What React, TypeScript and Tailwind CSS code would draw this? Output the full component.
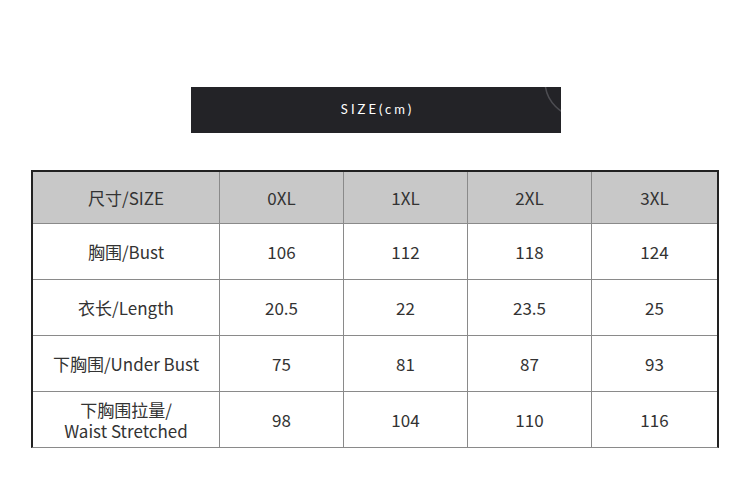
const head = ["尺寸/SIZE", "0XL", "1XL", "2XL", "3XL"];

const rows: { label: React.ReactNode; values: string[] }[] = [
  { label: "胸围/Bust", values: ["106", "112", "118", "124"] },
  { label: "衣长/Length", values: ["20.5", "22", "23.5", "25"] },
  { label: "下胸围/Under Bust", values: ["75", "81", "87", "93"] },
  {
    label: (
      <div className="flex flex-col items-center leading-[21px]">
        <div>下胸围拉量/</div>
        <div>Waist Stretched</div>
      </div>
    ),
    values: ["98", "104", "110", "116"],
  },
];

const cols = ["w-[187px]", "w-[124px]", "w-[124px]", "w-[124px]", "w-[125px]"];

export default function App() {
  return (
    <div
      className="w-[750px] h-[496px] bg-white flex flex-col items-center pt-[87px] text-[#333]"
      style={{ fontFamily: '"Noto Sans CJK SC", "Noto Sans", sans-serif' }}
    >
      <div className="relative ml-[2px] w-[370px] h-[46px] bg-[#232327] flex items-center justify-center overflow-hidden">
        <span
          className="text-white text-[13px] tracking-[3px] pl-[3px]"
          style={{ fontFamily: "Lato, sans-serif" }}
        >
          SIZE(cm)
        </span>
        <svg className="absolute right-0 top-0" width="20" height="34" viewBox="0 0 20 34">
          <circle cx="40" cy="-6" r="36" fill="none" stroke="#4d4d52" strokeWidth="1.5" />
        </svg>
      </div>

      <div className="mt-[37px] border-t-2 border-l-2 border-r-2 border-[#222] border-b border-b-[#8a8a8a] text-[17px]">
        <div className="flex h-[51px] bg-[#c8c8c8]">
          {head.map((t, i) => (
            <div
              key={t}
              className={`${cols[i]} flex items-center justify-center ${i < 4 ? "border-r border-[#8a8a8a]" : ""}`}
            >
              {t}
            </div>
          ))}
        </div>
        {rows.map((r, ri) => (
          <div key={ri} className="flex h-[56px] border-t border-[#8a8a8a]">
            <div className={`${cols[0]} flex items-center justify-center text-center border-r border-[#8a8a8a]`}>
              {r.label}
            </div>
            {r.values.map((v, i) => (
              <div
                key={i}
                className={`${cols[i + 1]} flex items-center justify-center ${i < 3 ? "border-r border-[#8a8a8a]" : ""}`}
              >
                {v}
              </div>
            ))}
          </div>
        ))}
      </div>
    </div>
  );
}
